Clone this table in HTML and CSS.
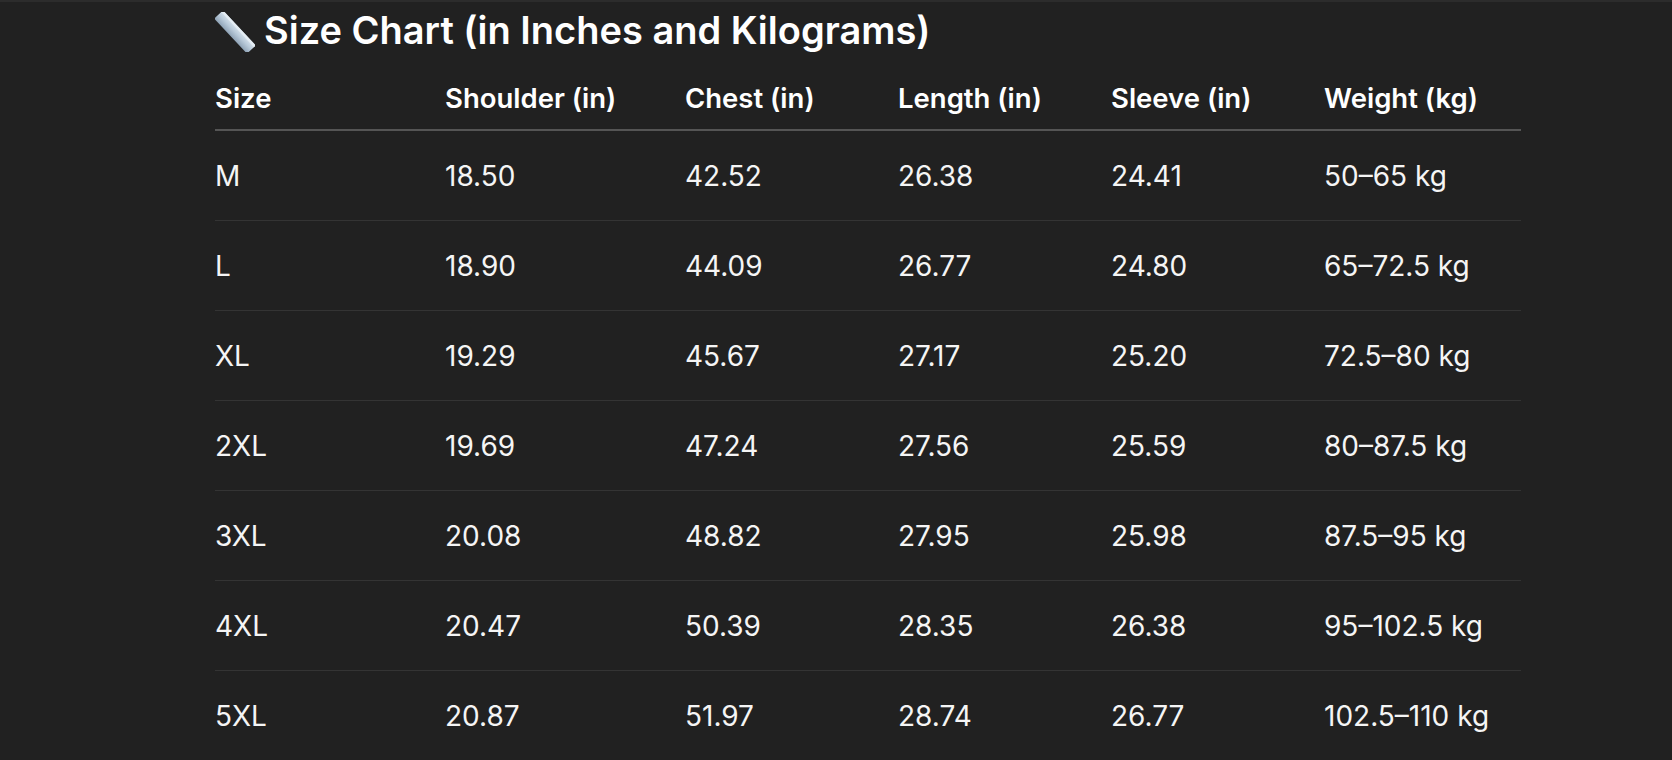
FILE: index.html
```html
<!DOCTYPE html>
<html lang="en">
<head>
<meta charset="utf-8">
<title>Size Chart</title>
<link rel="stylesheet" href="styles.css">
</head>
<body>
<main class="page">
  <h2 class="title">
    <svg class="ruler" viewBox="0 0 40 40" width="40" height="40" aria-hidden="true">
      <defs>
        <linearGradient id="rg" x1="0" y1="0" x2="0" y2="1">
          <stop offset="0" stop-color="#dbe6ef"/>
          <stop offset="0.5" stop-color="#b9cad9"/>
          <stop offset="1" stop-color="#8fa3b6"/>
        </linearGradient>
      </defs>
      <g transform="rotate(47 20 20)">
        <rect x="-4" y="14" width="48" height="12" rx="1.5" fill="url(#rg)"/>
        <rect x="-4" y="14" width="48" height="2.5" fill="#e8f0f6" opacity="0.8"/>
      </g>
    </svg>
    <span>Size Chart (in Inches and Kilograms)</span>
  </h2>
  <table class="chart">
    <colgroup>
      <col class="c1"><col class="c2"><col class="c3"><col class="c4"><col class="c5"><col class="c6">
    </colgroup>
    <thead>
      <tr><th>Size</th><th>Shoulder (in)</th><th>Chest (in)</th><th>Length (in)</th><th>Sleeve (in)</th><th>Weight (kg)</th></tr>
    </thead>
    <tbody>
      <tr><td>M</td><td>18.50</td><td>42.52</td><td>26.38</td><td>24.41</td><td>50–65 kg</td></tr>
      <tr><td>L</td><td>18.90</td><td>44.09</td><td>26.77</td><td>24.80</td><td>65–72.5 kg</td></tr>
      <tr><td>XL</td><td>19.29</td><td>45.67</td><td>27.17</td><td>25.20</td><td>72.5–80 kg</td></tr>
      <tr><td>2XL</td><td>19.69</td><td>47.24</td><td>27.56</td><td>25.59</td><td>80–87.5 kg</td></tr>
      <tr><td>3XL</td><td>20.08</td><td>48.82</td><td>27.95</td><td>25.98</td><td>87.5–95 kg</td></tr>
      <tr><td>4XL</td><td>20.47</td><td>50.39</td><td>28.35</td><td>26.38</td><td>95–102.5 kg</td></tr>
      <tr><td>5XL</td><td>20.87</td><td>51.97</td><td>28.74</td><td>26.77</td><td>102.5–110 kg</td></tr>
    </tbody>
  </table>
</main>
</body>
</html>
```
FILE: styles.css
```css
html, body {
  margin: 0;
  padding: 0;
  background: #212121;
}
body {
  border-top: 2px solid #2c2c2c;
  color: #f5f5f5;
  font-family: Inter, "Noto Sans", "Liberation Sans", sans-serif;
  overflow: hidden;
  height: 758px;
}
.page {
  padding-left: 215px;
}
.title {
  display: flex;
  align-items: center;
  gap: 9px;
  margin: 6px 0 14px 0;
  height: 44px;
  font-size: 38px;
  font-weight: 600;
  line-height: 44px;
  color: #ffffff;
}
.ruler {
  flex: none;
  margin-top: 4px;
}
.chart {
  width: 1306px;
  border-collapse: collapse;
  table-layout: fixed;
}
.c1 { width: 230px; }
.c2 { width: 240px; }
.c3 { width: 213px; }
.c4 { width: 213px; }
.c5 { width: 213px; }
.c6 { width: 197px; }
.chart th,
.chart td {
  padding: 0;
  text-align: left;
  line-height: 32px;
  white-space: nowrap;
}
.chart th {
  font-size: 27.5px;
  font-weight: 600;
  padding-top: 16px;
  padding-bottom: 15px;
  border-bottom: 2px solid #555555;
  color: #ffffff;
}
.chart td {
  font-size: 28px;
  font-weight: 400;
  padding-top: 29px;
  padding-bottom: 28px;
  border-bottom: 1px solid #343434;
}
```
